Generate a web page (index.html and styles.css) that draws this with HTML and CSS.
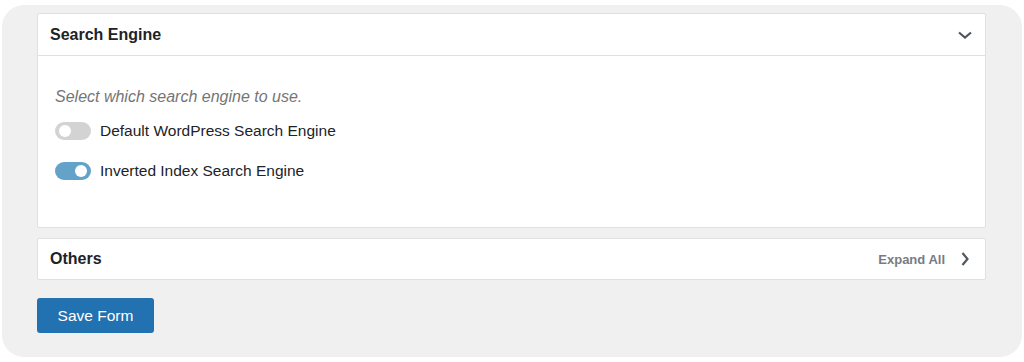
FILE: index.html
```
<!DOCTYPE html>
<html>
<head>
    <link rel="stylesheet" href="styles.css">
</head>
<body>
    <div class="panel">
        <!-- Search engine section -->
        <div class="box">
            <div class="box-header">
                <h2 class="box-title">Search Engine</h2>
                <svg class="chevron" width="16" height="16" viewBox="0 0 16 16"><path d="M2 5.5 L8 10.5 L14 5.5" fill="none" stroke="#50575e" stroke-width="2.2"/></svg>
            </div>
            <div class="box-body">
                <p class="hint">Select which search engine to use.</p>
                <label class="option">
                    <span class="toggle"><span class="knob"></span></span>
                    Default WordPress Search Engine
                </label>
                <label class="option">
                    <span class="toggle on"><span class="knob"></span></span>
                    Inverted Index Search Engine
                </label>
            </div>
        </div>

        <!-- Others section -->
        <div class="box">
            <div class="box-header last">
                <h2 class="box-title">Others</h2>
                <div class="expand">
                    <span>Expand All</span>
                    <svg class="chevron" width="16" height="16" viewBox="0 0 16 16"><path d="M5.5 2 L10.5 8 L5.5 14" fill="none" stroke="#50575e" stroke-width="2.2"/></svg>
                </div>
            </div>
        </div>

        <button class="save-btn">Save Form</button>
    </div>
</body>
</html>
```

FILE: styles.css
```
body {
    margin: 0;
    background: #fff;
    font-family: "Liberation Sans", Arial, sans-serif;
    color: #1d2327;
}

.panel {
    margin: 5px 2px 0 2px;
    height: 352px;
    box-sizing: border-box;
    background: #f0f0f1;
    border-radius: 22px;
    padding: 8px 36px 0 35px;
}

.box {
    background: #fff;
    border: 1px solid #e0e0e0;
    border-radius: 2px;
    margin-bottom: 10px;
}

.box-header {
    display: flex;
    align-items: center;
    justify-content: space-between;
    height: 41px;
    padding: 0 12px 0 12px;
    border-bottom: 1px solid #e0e0e0;
}

.box-header.last {
    border-bottom: none;
    height: 40px;
}

.box-title {
    margin: 0;
    font-size: 16px;
    font-weight: bold;
}

.chevron {
    display: block;
}

.box-body {
    height: 171px;
    box-sizing: border-box;
    padding: 31px 18px 0 17px;
}

.hint {
    margin: 0 0 14px 0;
    font-size: 16px;
    font-style: italic;
    color: #757575;
    line-height: 20px;
}

.option {
    display: flex;
    align-items: center;
    gap: 9px;
    font-size: 15.5px;
    line-height: 20px;
    margin-bottom: 20px;
}

.toggle {
    position: relative;
    width: 36px;
    height: 18px;
    border-radius: 9px;
    background: #d3d3d3;
}

.toggle.on {
    background: #63a3c9;
}

.knob {
    position: absolute;
    top: 3px;
    left: 4px;
    width: 12px;
    height: 12px;
    border-radius: 50%;
    background: #fff;
}

.toggle.on .knob {
    left: 20px;
}

.expand {
    display: flex;
    align-items: center;
    gap: 12px;
    font-size: 13px;
    font-weight: bold;
    color: #787c82;
}

.save-btn {
    margin-top: 8px;
    width: 117px;
    height: 35px;
    background: #2271b1;
    color: #fff;
    border: none;
    border-radius: 3px;
    font-family: "Liberation Sans", Arial, sans-serif;
    font-size: 15.5px;
}
```
